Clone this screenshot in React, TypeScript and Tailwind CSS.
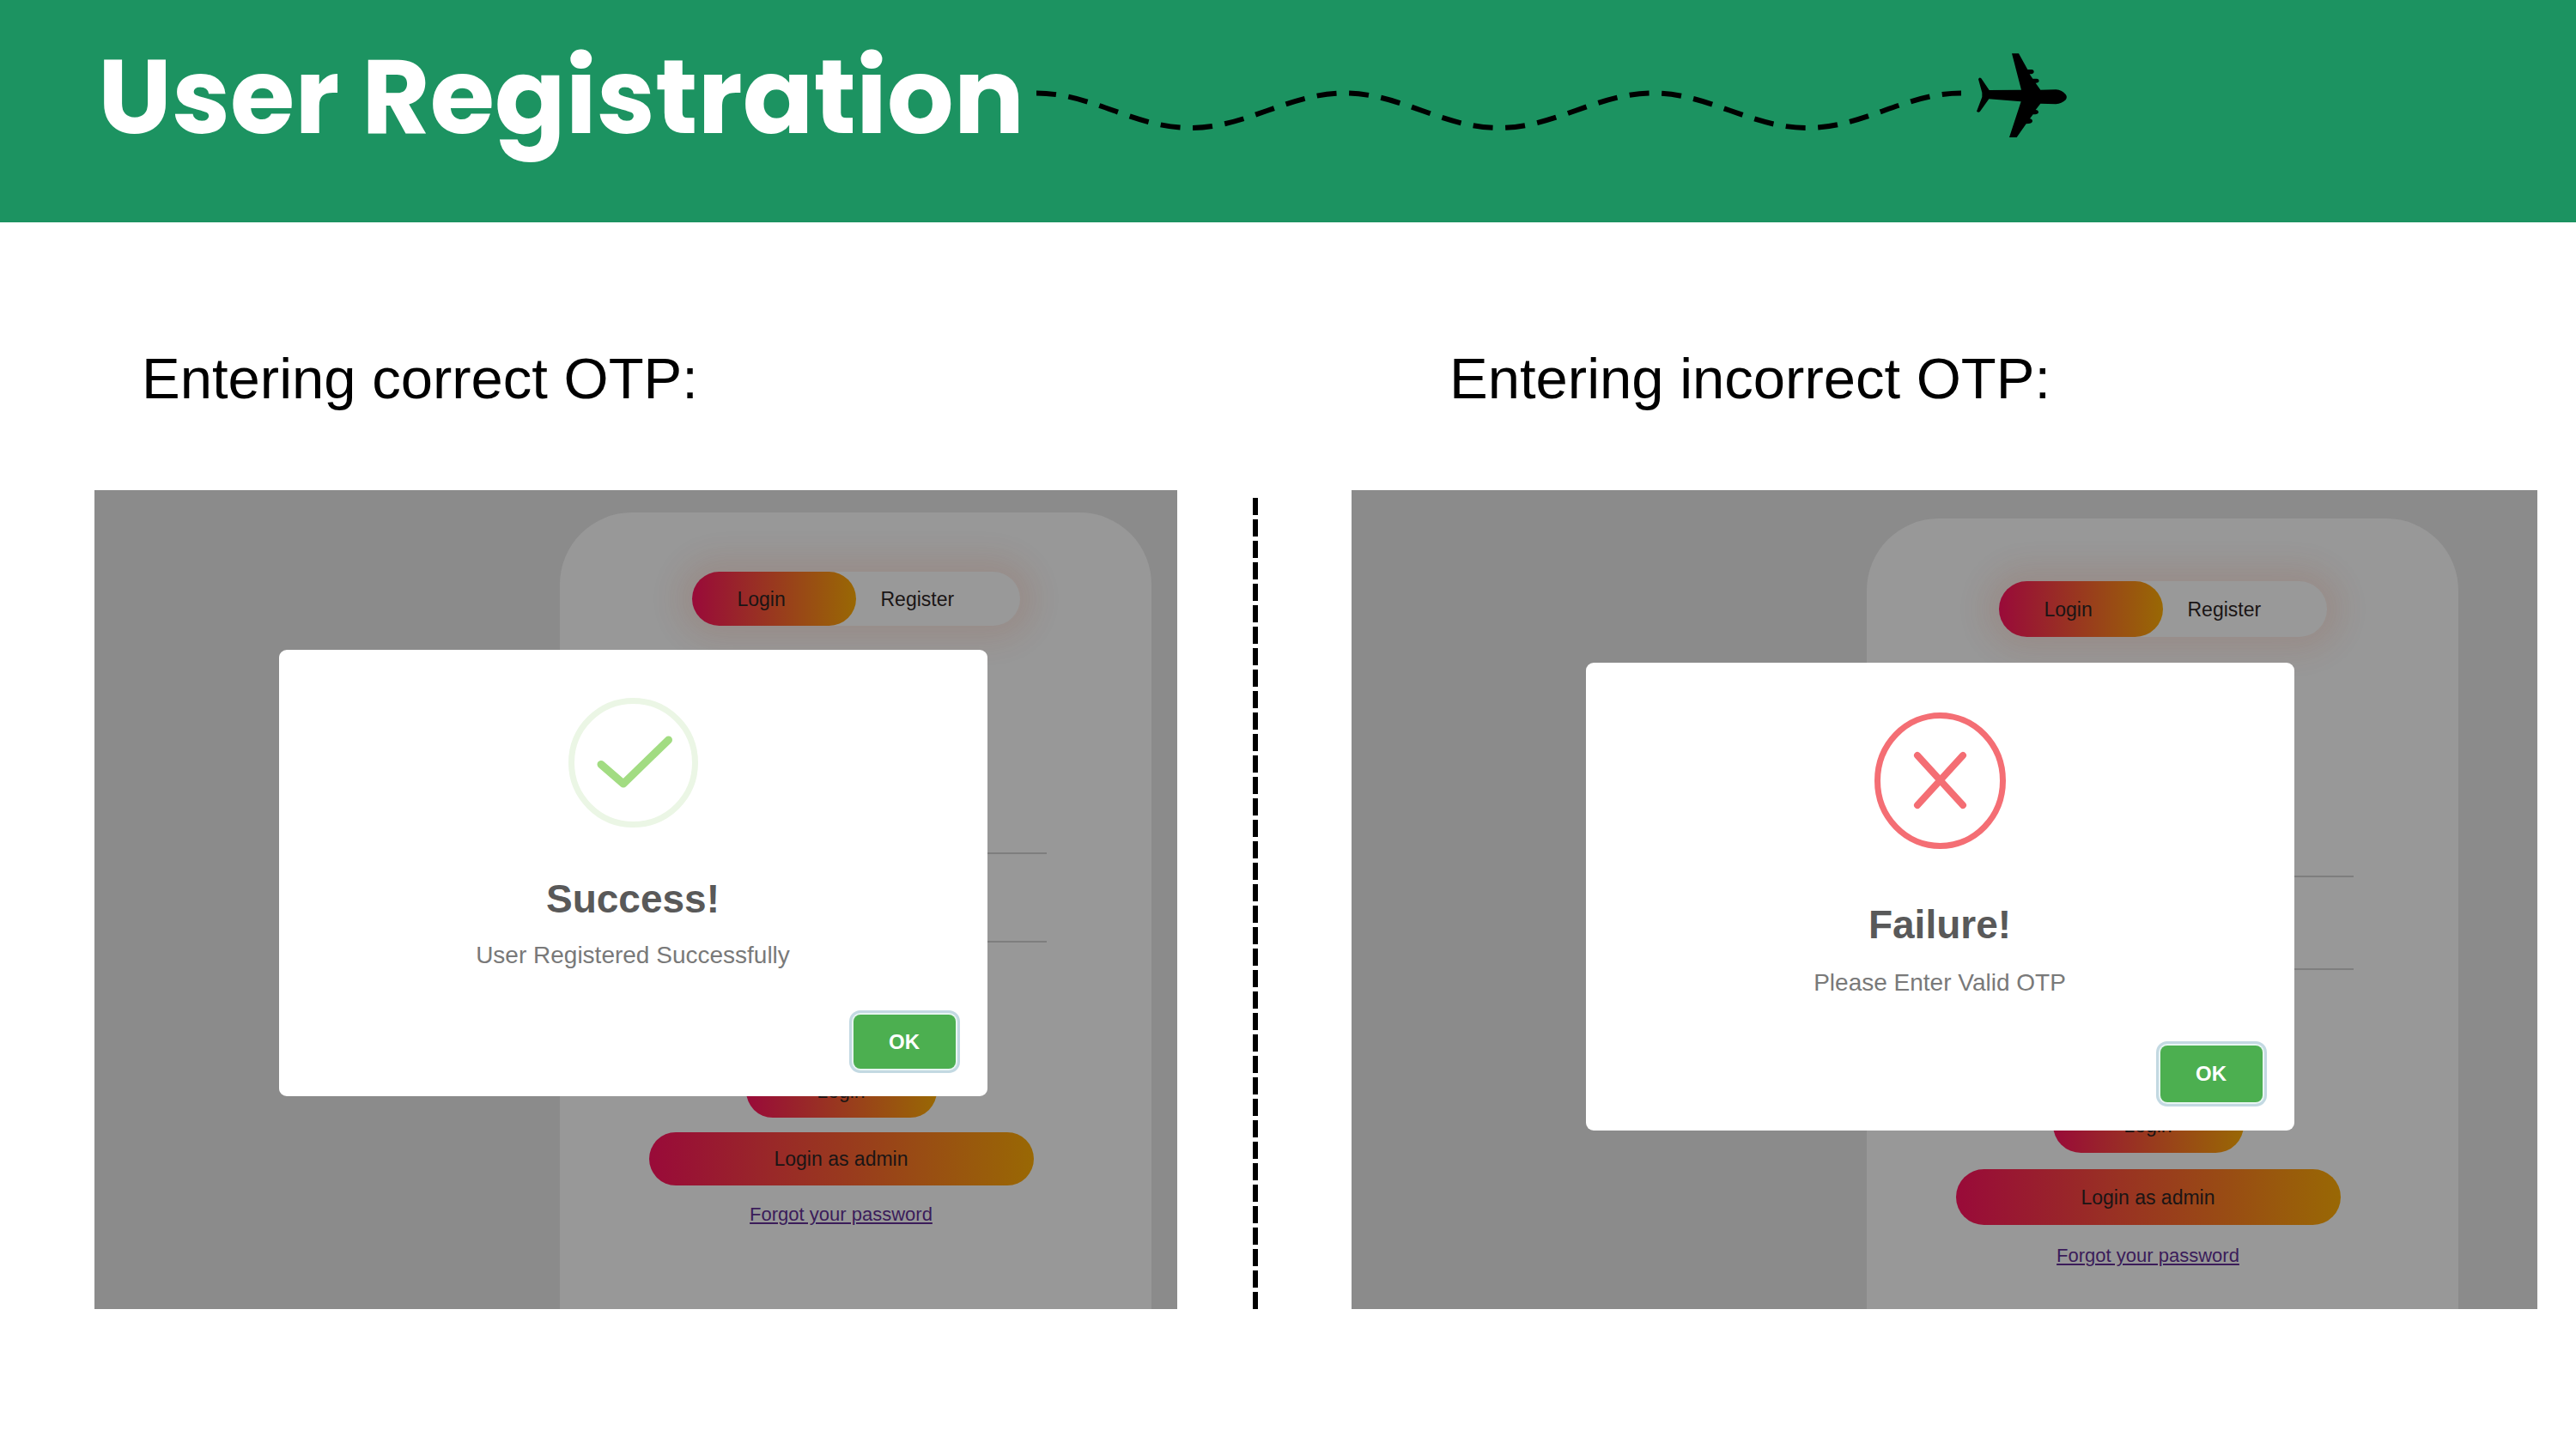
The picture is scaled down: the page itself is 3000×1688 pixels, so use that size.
import React from "react";

type Variant = {
  id: string;
  heading: string;
  headingPad: string;
  panel: string;
  tabs: string;
  firstField: string;
  secondField: string;
  submit: string;
  admin: string;
  link: string;
  overlay: string;
  modal: string;
  title: string;
  titleGap: string;
  message: string;
  messageGap: string;
  ok: string;
  icon: React.ReactNode;
};

const gradient = "bg-linear-[to_right,#990a39,#996804]";

function SuccessIcon() {
  return (
    <svg width="151" height="151" viewBox="0 0 151 151" fill="none" aria-hidden="true">
      <circle cx="75.5" cy="75.5" r="72" stroke="#ebf6e5" strokeWidth="7" />
      <path d="M38 77.5 64 100 M64 100 116.500 49" stroke="#a2dc82" strokeWidth="9" strokeLinecap="round" />
    </svg>
  );
}

function FailureIcon() {
  return (
    <svg width="153" height="159" viewBox="0 0 153 159" fill="none" aria-hidden="true">
      <ellipse cx="76.5" cy="79.5" rx="73" ry="76" stroke="#f46e74" strokeWidth="7" />
      <path d="M50 50 103 108 M103 50 50 108" stroke="#f46e74" strokeWidth="8" strokeLinecap="round" />
    </svg>
  );
}

function FlightPath() {
  return (
    <svg className="mt-[52px] shrink-0" width="1077" height="50" viewBox="0 0 1077 50" fill="none" aria-hidden="true">
      <path
        d="M0 4.5C65.4 4.5 114.1 45 179.5 45S293.6 4.5 359 4.5S473.1 45 538.5 45S652.6 4.5 718 4.5S832.1 45 897.5 45S1011.6 4.5 1077 4.5"
        stroke="#000"
        strokeWidth="6"
        strokeDasharray="23 14.5"
      />
    </svg>
  );
}

function Plane() {
  return (
    <svg className="ml-[17px] mt-[9px] shrink-0" width="108" height="102" viewBox="150 62 324 306" aria-hidden="true">
      <path d="M276 66H300L331 122H345Q353 122 353 130 352 138 338 138L349 154H364Q371 155 371 162 370 169 359 169L376 193 430 192Q452 194 464 209 471 218 464 228 450 242 430 243L376 241 359 263Q369 263 369 272 368 279 350 279L339 294Q348 295 348 303 347 312 326 312L293 359H267L308 234 196 225 165 268Q160 274 153 268L172 218V203L159 156Q162 147 169 153L197 194 309 193Z" />
    </svg>
  );
}

const variants: Variant[] = [
  {
    id: "success",
    heading: "Entering correct OTP:",
    headingPad: "pl-[55px]",
    panel: "pt-[26px] pr-[30px]",
    tabs: "mt-[69px] h-[63px]",
    firstField: "mt-[200px] h-[66px]",
    secondField: "mt-[37px] h-[66px]",
    submit: "mt-[142px] h-[62px]",
    admin: "mt-[17px] h-[62px]",
    link: "mt-[22px]",
    overlay: "pt-[186px] pr-[7px]",
    modal: "pt-[56px] pb-[32px]",
    title: "Success!",
    titleGap: "mt-[60px]",
    message: "User Registered Successfully",
    messageGap: "mt-[29px]",
    ok: "mt-[55px] h-[63px]",
    icon: <SuccessIcon />,
  },
  {
    id: "failure",
    heading: "Entering incorrect OTP:",
    headingPad: "pl-[114px]",
    panel: "pt-[33px] pr-[92px]",
    tabs: "mt-[73px] h-[65px]",
    firstField: "mt-[212px] h-[68px]",
    secondField: "mt-[40px] h-[68px]",
    submit: "mt-[148px] h-[65px]",
    admin: "mt-[19px] h-[65px]",
    link: "mt-[24px]",
    overlay: "pt-[201px] pr-[11px]",
    modal: "pt-[58px] pb-[33px]",
    title: "Failure!",
    titleGap: "mt-[65px]",
    message: "Please Enter Valid OTP",
    messageGap: "mt-[31px]",
    ok: "mt-[59px] h-[66px]",
    icon: <FailureIcon />,
  },
];

function LoginForm({ v }: { v: Variant }) {
  return (
    <div className="w-[689px] rounded-t-[84px] bg-[#989898] text-[23px] leading-[24px] text-[#1a1515]">
      <div
        className={`mx-auto flex w-[382px] rounded-full bg-[#999999] shadow-[0_0_35px_16px_rgba(153,58,22,0.12)] ${v.tabs}`}
      >
        <button type="button" className={`w-1/2 rounded-full pl-[53px] text-left ${gradient}`}>
          Login
        </button>
        <button type="button" className="w-1/2 pl-[29px] text-left">
          Register
        </button>
      </div>
      <form className="ml-[88px] flex w-[479px] flex-col items-center" onSubmit={(e) => e.preventDefault()}>
        <input
          type="text"
          aria-label="User name"
          className={`w-full border-b-2 border-[#7e7e7e] bg-transparent ${v.firstField}`}
        />
        <input
          type="password"
          aria-label="Password"
          className={`w-full border-b-2 border-[#7e7e7e] bg-transparent ${v.secondField}`}
        />
        <button type="submit" className={`w-[222px] rounded-full ${gradient} ${v.submit}`}>
          Login
        </button>
        <button type="button" className={`w-[448px] rounded-full ${gradient} ${v.admin}`}>
          Login as admin
        </button>
        <a href="#forgot" className={`text-[22px] text-[#3b1c5a] underline ${v.link}`}>
          Forgot your password
        </a>
      </form>
    </div>
  );
}

function Alert({ v }: { v: Variant }) {
  return (
    <div
      role="alertdialog"
      aria-labelledby={`${v.id}-title`}
      aria-describedby={`${v.id}-message`}
      className={`flex w-[825px] flex-col items-center rounded-[9px] bg-white ${v.modal}`}
    >
      {v.icon}
      <h3 id={`${v.id}-title`} className={`text-[46px] leading-none font-bold text-[#595959] ${v.titleGap}`}>
        {v.title}
      </h3>
      <p id={`${v.id}-message`} className={`text-[28px] leading-none text-[#797979] ${v.messageGap}`}>
        {v.message}
      </p>
      <button
        type="button"
        className={`mr-[37px] w-[119px] self-end rounded-[8px] bg-[#4caf50] text-[24px] leading-none font-bold text-white shadow-[0_0_0_2px_#e8f5f2,0_0_0_5px_#c3d9e2] ${v.ok}`}
      >
        OK
      </button>
    </div>
  );
}

function Result({ v }: { v: Variant }) {
  return (
    <section className="flex flex-col">
      <h2 className={`text-[67px] leading-none text-black ${v.headingPad}`}>{v.heading}</h2>
      <div className={`relative mt-[97px] flex min-h-[954px] justify-end bg-[#8b8b8b] ${v.panel}`}>
        <LoginForm v={v} />
        <div className={`absolute inset-0 flex items-start justify-center ${v.overlay}`}>
          <Alert v={v} />
        </div>
      </div>
    </section>
  );
}

export default function App() {
  return (
    <div className="min-h-screen bg-white font-['Liberation_Sans',Arial,sans-serif]">
      <header className="flex min-h-[259px] items-start bg-[#1c9361] pt-[52px] pl-[114px]">
        <h1 className="mr-[14px] font-['Poppins','Inter',sans-serif] text-[122px] leading-none font-bold whitespace-nowrap text-white">
          User Registration
        </h1>
        <FlightPath />
        <Plane />
      </header>
      <main className="grid grid-cols-[1261fr_203fr_1381fr] pt-[148px] pr-[45px] pb-[100px] pl-[110px]">
        <Result v={variants[0]} />
        <div
          role="separator"
          aria-orientation="vertical"
          className="mt-[173px] ml-[88px] w-[6px] bg-[repeating-linear-gradient(to_bottom,#000_0_20px,transparent_20px_25px)]"
        />
        <Result v={variants[1]} />
      </main>
    </div>
  );
}
